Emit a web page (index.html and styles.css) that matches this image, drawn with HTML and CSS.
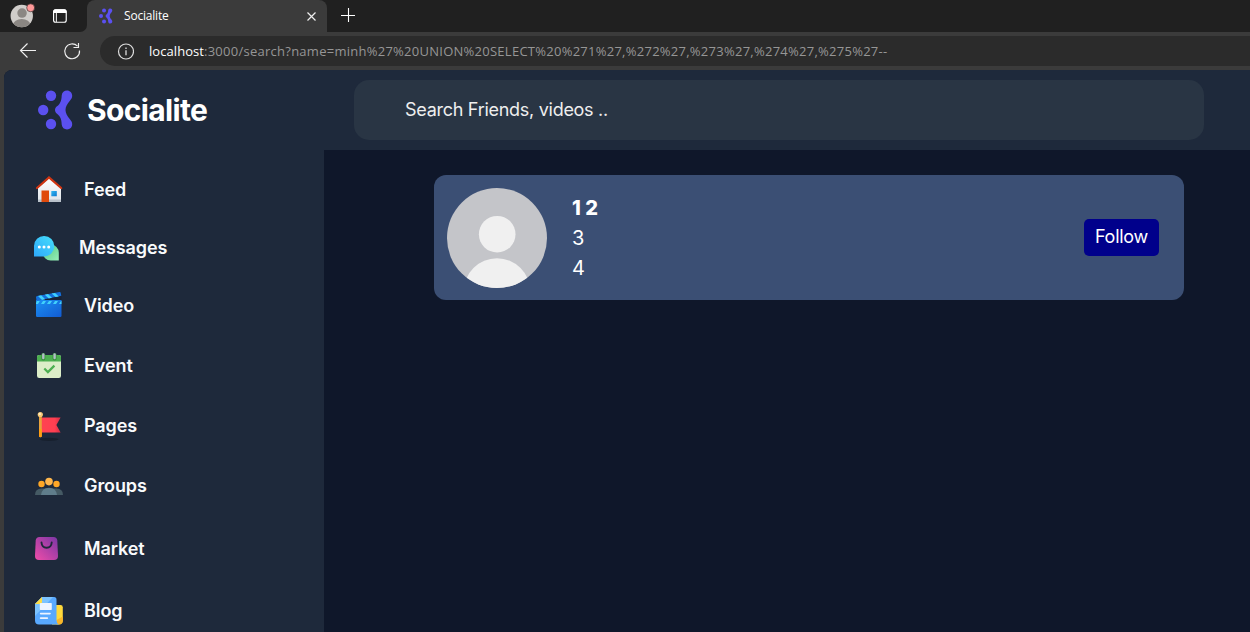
FILE: index.html
```
<!DOCTYPE html>
<html lang="en">
<head>
<meta charset="utf-8">
<title>Socialite</title>
<link rel="stylesheet" href="styles.css">
</head>
<body>
<div class="browser">
  <div class="tabstrip">
    <svg class="profile" width="88" height="32" viewBox="0 0 88 32">
      <defs><clipPath id="pc"><circle cx="22" cy="16" r="11.3"/></clipPath></defs>
      <circle cx="22" cy="16" r="11.3" fill="#d0cdca"/>
      <g clip-path="url(#pc)" fill="#8b8783"><circle cx="22.3" cy="13" r="4.8"/><ellipse cx="22" cy="25" rx="8.8" ry="6"/></g>
      <circle cx="31" cy="7.7" r="4" fill="#f99" stroke="#202020" stroke-width=".6"/>
      <rect x="54.200" y="9.700" width="12.800" height="12.600" rx="2" fill="none" stroke="#fff" stroke-width="1.200"/>
      <path d="M54 13v-1.500q0-2.300 2.300-2.300h8.600q2.300 0 2.300 2.300V13z" fill="#fff"/><path d="M57 13v9" stroke="#fff"/>
    </svg>
    <div class="tab">
      <svg class="tab-logo" width="14" height="16" viewBox="0 0 36 40" fill="#5b50f0"><use href="#logo"/></svg>
      <span class="tab-title">Socialite</span>
      <svg width="9" height="9" viewBox="0 0 9 9"><path d="M.5.5l8 8M8.500.5l-8 8" stroke="#eee" stroke-width="1.200"/></svg>
    </div>
    <svg class="new-tab" width="15" height="15" viewBox="0 0 15 15"><path d="M0 7.500h14M7.500 0v14" stroke="#fff" stroke-width="1.100"/></svg>
  </div>
  <div class="toolbar">
    <svg width="100" height="38" viewBox="0 0 100 38" fill="none" stroke="#f0f0f0" stroke-width="1.150">
      <path d="M36 18.500H20.500M27.500 11.500l-7 7 7 7"/>
      <path d="M77.500 14.200a7.400 7.400 0 1 0 2 4.300M78.500 11v4.500H73.500"/>
    </svg>
    <div class="address">
      <svg width="17" height="17" viewBox="0 0 17 17"><circle cx="9" cy="8.500" r="7.500" fill="none" stroke="#ddd" stroke-width="1.200"/><path d="M9 7.300v5M9 4.500V6" stroke="#ddd" stroke-width="1.300"/></svg>
      <span class="url"><span class="host">localhost</span>:3000/search?name=minh%27%20UNION%20SELECT%20%271%27,%272%27,%273%27,%274%27,%275%27--</span>
    </div>
  </div>
</div>
<div class="app">
  <aside class="sidebar">
    <div class="brand">
      <svg width="36" height="40" viewBox="0 0 36 40" fill="#5b50f0">
        <g id="logo"><circle cx="13" cy="5.800" r="5.200"/><circle cx="5.200" cy="20" r="5.200"/><circle cx="13" cy="34" r="5.200"/>
        <path d="M23.700 5.500C24 2.300 26.300.6 29 .6c3 0 5.200 2.400 5.200 5.200 0 2-1 3.400-2.300 5-2.500 3-4.400 6-4.400 9.200s1.900 6.200 4.400 9.200c1.300 1.500 2.300 3 2.300 5 0 2.800-2.200 5.200-5.200 5.200-2.700 0-5-1.700-5.300-4.900-.2-5.500-1.500-8.500-4.700-10.800-1.300-1-2-2.200-2-3.700s.7-2.700 2-3.700c3.200-2.300 4.500-5.300 4.700-10.800z"/></g>
      </svg>
      <span class="brand-name">Socialite</span>
    </div>
    <nav class="menu">
      <a class="item">
        <svg class="icon" viewBox="0 0 34 34"><defs><linearGradient id="wall" x2="0" y2="1"><stop stop-color="#fff"/><stop offset="1" stop-color="#dfe3e8"/></linearGradient><linearGradient id="pane" x2="1" y2="1"><stop stop-color="#35b8f1"/><stop offset="1" stop-color="#0a78d0"/></linearGradient></defs>
        <path d="M6 15L17 5l12 10v14H6z" fill="url(#wall)"/><path d="M6 26.500h23V29H6z" fill="#b9c1ca"/><path d="M9.500 17.500H17V29H9.500z" fill="#e04a0c"/><path d="M19.300 18h5.500v5.300h-5.500z" fill="url(#pane)"/><path d="M5 15L17 4.500 29.200 15" fill="none" stroke="#cf3512" stroke-width="2.200" stroke-linecap="round"/></svg>
        <span class="label">Feed</span></a>
      <a class="item messages">
        <svg class="icon" viewBox="0 0 34 34"><defs><linearGradient id="chat" x1="1" x2="0" y2="1"><stop stop-color="#46dffb"/><stop offset="1" stop-color="#2ea8fa"/></linearGradient><linearGradient id="reply" x2="1" y2="1"><stop stop-color="#4cc47f"/><stop offset="1" stop-color="#98f0b8"/></linearGradient></defs>
        <path d="M18.500 13.500a8.200 8.200 0 0 1 8.300 8.500v7.500h-8a8 8 0 1 1-.3-16z" fill="url(#reply)"/><path d="M12.200 5A10.200 10.200 0 1 1 12 25.400H2V15A10 10 0 0 1 12.200 5z" fill="url(#chat)"/><g fill="#fff"><circle cx="7.300" cy="16" r="1.500"/><circle cx="12" cy="16" r="1.500"/><circle cx="16.700" cy="16" r="1.500"/></g></svg>
        <span class="label">Messages</span></a>
      <a class="item">
        <svg class="icon" viewBox="0 0 34 34"><defs><linearGradient id="board" x2="1" y2="1"><stop stop-color="#1b90f3"/><stop offset="1" stop-color="#125bd2"/></linearGradient></defs>
        <path d="M4 11h25.500v15.800q0 1.200-1.200 1.200H5.200Q4 28 4 26.800z" fill="url(#board)"/><path d="M4 8.200q0-1 1-1.200L27.500 3q1-.2 1.200.8l.6 3L4.500 12z" fill="#136fdc"/><path d="M9 11l20.500-3.600V11z" fill="#182337"/><path d="M6 7l4 3.900 3.200-.7-4-3.900zM12.800 5.700l4 3.800 3.200-.7L16 5.100zM19.600 4.500l4 3.600 3.200-.7L23 3.900z" fill="#41d1fb"/><path d="M5 12h2.800L6 15H4v-1zM11 12h3l-2 3H9zM17 12h3l-2 3h-3zM23 12h3l-2 3h-3zM29 12h.5v3H27z" fill="#41d1fb"/></svg>
        <span class="label">Video</span></a>
      <a class="item">
        <svg class="icon" viewBox="0 0 34 34"><rect x="5" y="6" width="24" height="23" rx="2.200" fill="#dcedc8"/><path d="M5 12.500V8q0-2 2-2h20q2 0 2 2v4.500z" fill="#4caf50"/><g fill="none" stroke-linecap="round"><path d="M11.300 6v3.500M22.600 6v3.500" stroke="#388e3c" stroke-width="4"/><path d="M11.300 5.500V9M22.600 5.500V9" stroke="#b0bec5" stroke-width="2.400"/></g><path d="M12.300 19.500l3.600 3.600 6.500-6.500" fill="none" stroke="#4caf50" stroke-width="2.200"/></svg>
        <span class="label">Event</span></a>
      <a class="item">
        <svg class="icon" viewBox="0 0 34 34"><defs><linearGradient id="flag" x2="1"><stop stop-color="#ff4351"/><stop offset=".7" stop-color="#ff3f51"/><stop offset="1" stop-color="#d52d46"/></linearGradient></defs>
        <ellipse cx="17" cy="30.300" rx="9.500" ry="1.600" fill="#17202e"/><path d="M9 8.500h19.600L24.400 16l4.200 7.500H9z" fill="url(#flag)"/><path d="M7 7h2.800v20.500q-1.400 1.300-2.800 0z" fill="#e9a33c"/><path d="M7 20h2.800v7.500q-1.400 1.300-2.800 0z" fill="#ff9e13"/><circle cx="8.300" cy="5.500" r="2.600" fill="#f6c878"/><circle cx="7.800" cy="4.900" r="1.200" fill="#ffebbe"/></svg>
        <span class="label">Pages</span></a>
      <a class="item">
        <svg class="icon" viewBox="0 0 34 34"><path d="M3 26q0-6.500 6.500-6.500h15Q31 19.500 31 26z" fill="#455a64"/><path d="M9 26q1-7.300 8-7.300t8 7.300z" fill="#607d8b"/><g fill="#ffa726"><circle cx="9.500" cy="15" r="3.200"/><circle cx="24.500" cy="15" r="3.200"/></g><circle cx="17" cy="12.600" r="3.800" fill="#ffb74d"/></svg>
        <span class="label">Groups</span></a>
      <a class="item market">
        <svg class="icon" viewBox="0 0 34 34"><defs><linearGradient id="bag" x1="0" y1="1" x2="1" y2="0"><stop stop-color="#ef4da8"/><stop offset="1" stop-color="#7a36a6"/></linearGradient></defs>
        <path d="M7.500 5h14q3.500 0 3.800 3.500L26 24q0 4-4 4H7q-4 0-4-4L3.700 8.500Q4 5 7.500 5z" fill="url(#bag)"/><path d="M9.500 10.500c.5 7 9.700 7 10.200 0" fill="none" stroke="#1e293b" stroke-width="1.900" stroke-linecap="round"/></svg>
        <span class="label">Market</span></a>
      <a class="item blog">
        <svg class="icon" viewBox="0 0 34 34"><path d="M20 11h8.500q2.300 0 2.300 2.300v13.200q0 4-4 4H20z" fill="#ffd93b"/><path d="M24.500 26v4.500h2.300q4-.3 4-4v-4z" fill="#f9b529"/><path d="M10 3h12q2.500 0 2.500 2.500V26q0 3.500 2.300 4.500H7q-4 0-4-4V10z" fill="#59a9ff"/><path d="M10 3h11L3 22V10z" fill="#7cc3ff"/><path d="M10 3v5q0 2-2 2H3z" fill="#ffdc42"/><g fill="#edf4ff"><rect x="7.800" y="9" width="12" height="7" rx=".8"/><rect x="7.800" y="18.700" width="11" height="1.700" rx=".8"/><rect x="7.800" y="23.300" width="8.300" height="1.700" rx=".8"/></g></svg>
        <span class="label">Blog</span></a>
    </nav>
  </aside>
  <div class="content">
    <header class="topbar"><div class="search">Search Friends, videos ..</div></header>
    <main class="results">
      <article class="card">
        <svg class="avatar" viewBox="0 0 100 100"><defs><clipPath id="av"><circle cx="50" cy="50" r="50"/></clipPath></defs><g clip-path="url(#av)"><path d="M0 0h100v100H0z" fill="#c4c5c9"/><circle cx="50.200" cy="46.200" r="18.300" fill="#f0f0f0"/><circle cx="50" cy="103.500" r="33.300" fill="#f0f0f0"/></g></svg>
        <div class="info"><strong>1 2</strong><span>3</span><span>4</span></div>
        <button class="follow">Follow</button>
      </article>
    </main>
  </div>
</div>
</body>
</html>
```
FILE: styles.css
```
* { box-sizing: border-box; }
body {
  margin: 0;
  width: 1250px;
  height: 632px;
  overflow: hidden;
  display: flex;
  flex-direction: column;
  background: #3b3b3b;
  color: #fff;
  font-family: Inter, "Liberation Sans", sans-serif;
}
svg { flex: none; display: block; }
.browser { flex: none; font-family: "Open Sans", "Noto Sans", sans-serif; }
.tabstrip { display: flex; height: 32px; background: linear-gradient(to right, #3b3b3b 87px, #202020 87px); }
.profile { width: 87px; background: #202020; border-bottom-right-radius: 7px; }
.tab {
  display: flex;
  align-items: center;
  width: 240px;
  padding: 0 11px 0 12px;
  background: #3b3b3b;
  border-radius: 8px 8px 0 0;
}
.tab-title { flex: 1; margin-left: 11px; font-size: 12px; letter-spacing: -.2px; line-height: 16px; padding-bottom: 1px; }
.new-tab { margin: 8px 0 0 14px; }
.toolbar { display: flex; height: 38px; background: #3b3b3b; }
.address {
  display: flex;
  align-items: center;
  flex: 1;
  height: 30px;
  margin-top: 4px;
  padding-left: 17px;
  gap: 15px;
  background: #2b2b2b;
  border-radius: 15px 0 0 15px;
}
.url { color: #969696; font-size: 13px; letter-spacing: .26px; white-space: nowrap; }
.host { color: #fff; letter-spacing: .06px; }
.app {
  display: flex;
  flex: 1;
  min-height: 0;
  margin-left: 4px;
  overflow: hidden;
  background: #0f172a;
  border-radius: 8px 0 0 0;
}
.sidebar { flex: none; width: 320px; background: #1e293b; }
.brand { display: flex; align-items: center; height: 79px; padding-left: 34px; gap: 13px; }
.brand-name { padding-top: 1px; font-size: 30px; font-weight: 700; letter-spacing: -.65px; color: #fff; }
.menu { padding-top: 11px; }
.item {
  display: flex;
  align-items: center;
  height: 60px;
  padding-left: 28px;
  gap: 18px;
  color: #f8fafc;
  font-size: 18px;
  font-weight: 600;
  letter-spacing: -.1px;
}
.label { padding-bottom: 2px; }
.icon { width: 34px; height: 34px; }
.messages { height: 56px; gap: 13px; }
.market { height: 66px; }
.blog { height: 58px; }
.content { flex: 1; }
.topbar { height: 80px; padding: 10px 46px 0 30px; background: #1e293b; }
.search {
  height: 60px;
  padding-left: 51px;
  border-radius: 15px;
  background: #293544;
  color: #eee;
  font-size: 18px;
  letter-spacing: -.28px;
  line-height: 60px;
}
.results { padding: 25px 66px 0 110px; }
.card {
  display: flex;
  align-items: center;
  height: 125px;
  padding: 0 25px 0 13px;
  border-radius: 12px;
  background: #3b4f74;
}
.avatar { width: 100px; height: 100px; }
.info { display: flex; flex: 1; flex-direction: column; margin-left: 25px; font-size: 20px; line-height: 30px; }
.info strong { font-weight: 800; }
.follow {
  width: 75px;
  height: 37px;
  padding: 0 0 2px;
  border: 0;
  border-radius: 5px;
  background: #00008b;
  color: #fff;
  font: 18px/35px Inter, sans-serif;
  letter-spacing: -.25px;
}
```
